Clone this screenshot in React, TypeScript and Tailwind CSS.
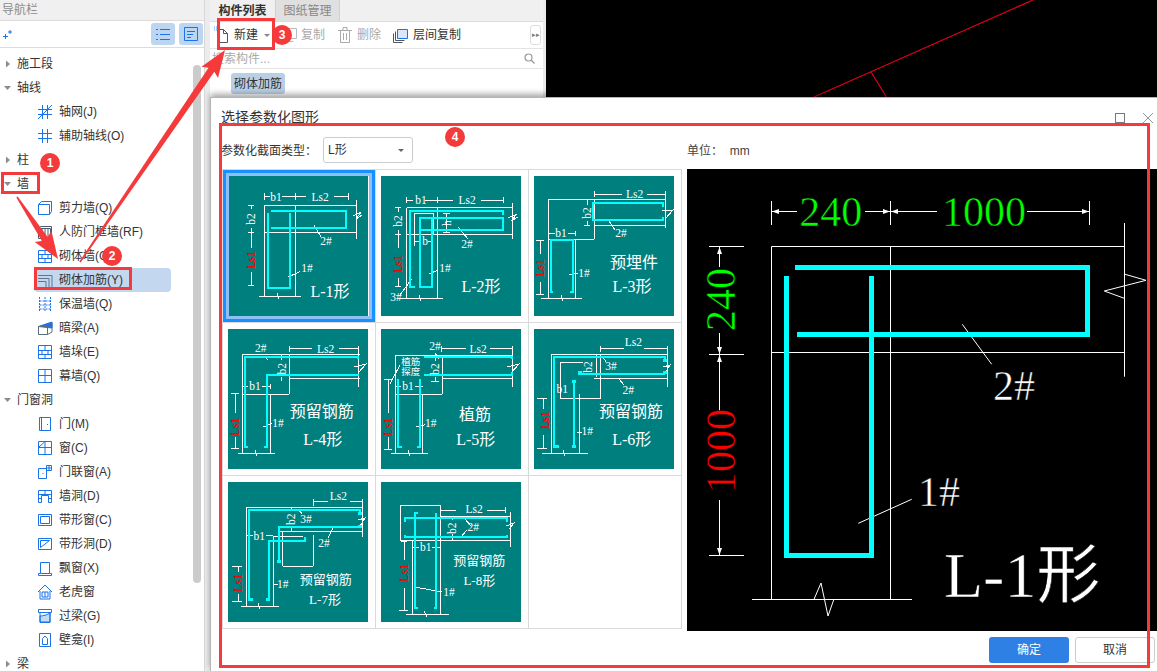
import { ReactNode } from "react";

type Label = [string, number, number, number?, string?, boolean?];
type Thumb = { name: string; lines: string[]; bars: string[]; thick?: string[]; labels: Label[] };

const thumbs: Thumb[] = [
  {
    name: "L-1",
    lines: [
      "36,17 36,24", "67.3,17 67.3,24", "120,17 120,24", "36,20.7 42,20.7", "54,20.7 78,20.7", "106,20.7 120,20.7",
      "36,29 128.7,29", "36,56.3 128.7,56.3", "128.7,24 128.7,63", "125,40 133,36 128,43 134,39",
      "36,29 36,120", "67.3,29 67.3,120", "31,120 72.7,120", "49,117 51,123",
      "20,29 26,29", "20,56 26,56", "20,109 26,109", "23,29 23,33", "23,52 23,72", "23,96 23,109",
      "86,49 93,60.7", "60,101 72,95.7",
    ],
    bars: ["43,35 118,35 118,51.7 43,51.7", "40.3,37.3 40.3,112 62.3,112 62.3,37.3"],
    labels: [
      ["b1", 48, 20.7], ["Ls2", 92, 20.7], ["b2", 23, 43, 11.5, "#fff", true], ["Ls1", 23, 84, 11.5, "#f00", true],
      ["2#", 98, 65], ["1#", 79, 92], ["L-1形", 102, 115, 16],
    ],
  },
  {
    name: "L-2",
    lines: [
      "25.7,21 25.7,27", "56.3,21 56.3,27", "122,21 122,27", "25.7,24 32,24", "44,24 72,24", "100,24 122,24",
      "25.7,31.7 131.7,31.7", "25.7,58 131.7,58", "131.7,27 131.7,63", "127,42 136,38 130,45 137,41",
      "25.7,31.7 25.7,122", "56.3,31.7 56.3,122", "16,122 61.7,122", "38,119 40,125",
      "33.3,37.3 52.3,37.3 52.3,58", "33.3,37.3 33.3,70", "65.7,37.7 65.7,56", "62,37.7 69,37.7", "62,56 69,56",
      "33,65 40,65", "47,65 52,65",
      "14,31.7 20,31.7", "14,58 20,58", "14,110 20,110", "17.3,31.7 17.3,36", "17.3,54 17.3,72", "17.3,102 17.3,110",
      "48,98 57,94", "77,51 87,63", "30.7,103 19,119",
    ],
    bars: [
      "121.7,39 121.7,35 29,35 29,110.7 34,110.7", "39,42.3 121.7,42.3 121.7,54 39,54",
      "39,40.7 39,110.7 51.3,110.7 51.3,40.7",
    ],
    labels: [
      ["b1", 40, 24], ["Ls2", 86, 24], ["b", 44, 65], ["h", 66, 47, 11.5, "#fff", true],
      ["b2", 17.3, 45, 11.5, "#fff", true], ["Ls1", 17.3, 88, 11.5, "#f00", true],
      ["1#", 64, 92], ["2#", 86, 68], ["3#", 15, 120.7], ["L-2形", 100, 110.7, 16],
    ],
  },
  {
    name: "L-3",
    lines: [
      "60.3,15 60.3,21", "131.7,15 131.7,52", "60.3,18 88,18", "113,18 131.7,18",
      "14.3,23.3 131.7,23.3", "14.3,23.3 14.3,122", "60.3,23.3 60.3,63", "14.3,63 60.3,63", "60.3,49 131.7,49",
      "41,63 41,122", "6.7,122 47.7,122", "27,119 29,125", "128,35 139,34 132,42",
      "53.3,23.3 53.3,29", "53.3,45 53.3,49", "50,49 56,49", "14.3,57 21,57", "34,57 41,57", "41,55 41,60",
      "2,64 10,64", "2,118 10,118", "6,64 6,78", "6,106 6,118",
      "35,99 44,97", "74.3,44 81,54",
    ],
    bars: [
      "129.3,30.7 129.3,27.3 59.3,27.3 59.3,44 129.3,44 129.3,40.7",
      "19.3,115.7 16.7,115.7 16.7,64 39.3,64 39.3,115.7 36,115.7",
    ],
    labels: [
      ["Ls2", 100.7, 18], ["b1", 27, 57], ["b2", 53, 37, 11.5, "#fff", true], ["Ls1", 6, 92, 11.5, "#f00", true],
      ["1#", 50, 97], ["2#", 87, 57], ["预埋件", 100, 86.7, 16], ["L-3形", 98, 110.7, 16],
    ],
  },
  {
    name: "L-4",
    lines: [
      "61.3,17 61.3,23", "130.7,17 130.7,58", "61.3,19.7 84,19.7", "111,19.7 130.7,19.7",
      "14.7,25.3 132,25.3", "14.7,25.3 14.7,124", "61.3,25.3 61.3,65", "14.7,65 61.3,65", "61.3,49.7 132,49.7",
      "42,65 42,124", "10,124 47,124", "27,121 29,127", "126,38 138,35 131,43",
      "53.7,25.3 53.7,31", "53.7,48 53.7,52", "14.7,57.3 20,57.3", "34,57.3 42,57.3", "42,55 42,60",
      "3,64.7 11,64.7", "3,119.7 11,119.7", "7,64.7 7,84", "7,108 7,119.7",
      "35.3,98 43.7,94.7", "36,27 40,31",
    ],
    bars: [
      "130.3,30 130.3,27.7 17,27.7 17,118 20.3,118",
      "130.3,44.7 130.3,45.7 38.7,45.7 38.7,118 36,118",
    ],
    labels: [
      ["Ls2", 97.7, 19.7], ["2#", 32.7, 19], ["b2", 53.7, 39.7, 11.5, "#fff", true], ["b1", 27, 57.3],
      ["Ls1", 7, 98, 11.5, "#f00", true], ["1#", 50, 94], ["预留钢筋", 93.7, 82, 16], ["L-4形", 94.7, 110, 16],
    ],
  },
  {
    name: "L-5",
    lines: [
      "60.7,17 60.7,23", "131.7,17 131.7,58", "60.7,19.7 85,19.7", "109,19.7 131.7,19.7",
      "14.7,26.3 132,26.3", "14.7,26.3 14.7,124", "61.3,26.3 61.3,65", "14.7,65 61.3,65", "61.3,49.7 132,49.7",
      "41.7,65 41.7,124", "10,124 47,124", "27,121 29,127", "126,38 138,35 131,43",
      "9,54.7 19,36", "14.7,57.3 20,57.3", "34,57.3 41.7,57.3",
      "54,28 54,32", "54,48 54,52", "50,52 58,52",
      "3,50 11,50", "3,120 11,120", "7.3,50 7.3,84", "7.3,108 7.3,120", "35,98 44,95.7", "54,24 58,30",
    ],
    bars: [
      "43,27.7 130.7,27.7 130.7,30", "43,45.7 130.7,45.7 130.7,43",
      "17.3,49.7 17.3,118 20.7,118", "39,49.7 39,118 35.7,118",
    ],
    labels: [
      ["Ls2", 97, 19.7], ["2#", 54, 17], ["植筋", 29.7, 33, 9.5], ["探度", 29.7, 43, 9.5], ["b1", 27, 57.3],
      ["b2", 54, 40, 11.5, "#fff", true], ["Ls1", 7.3, 98, 11.5, "#f00", true], ["1#", 49.7, 94],
      ["植筋", 94, 85.7, 16], ["L-5形", 94.7, 110, 16],
    ],
  },
  {
    name: "L-6",
    lines: [
      "66.7,17 66.7,23", "133.3,17 133.3,58", "66.7,19.7 90,19.7", "110,19.7 133.3,19.7",
      "17,25.3 134.3,25.3", "17,25.3 17,124", "66.7,25.3 66.7,69", "26,69 66.7,69", "26,33.7 49.3,33.7", "26,33.7 26,69",
      "62.7,25.3 62.7,48", "60,49.7 134.3,49.7", "45,65 45,124", "8.3,124 54,124", "29,121 31,127", "129,38 136,36 131,44",
      "69,28 72,33", "85,50 90,56",
      "3,69 13,69", "3,119.7 13,119.7", "9.3,69 9.3,80", "9.3,106 9.3,119.7", "43,103 48,103",
    ],
    bars: ["131,31.3 131,27.7 20.3,27.7 20.3,118 22.7,118", "44.3,44.7 131,44.7", "40,53 40,118"],
    thick: ["44,43.5 48,43.5", "129,31 133,31", "129,43 133,43", "21,117.5 25,117.5", "38,117.5 42,117.5", "38,52.5 42,52.5"],
    labels: [
      ["Ls2", 99.3, 13], ["b1", 28.3, 59.7], ["b2", 54.3, 38, 11.5, "#fff", true], ["3#", 77, 37.3], ["2#", 94.3, 61],
      ["Ls1", 11, 91.3, 11.5, "#f00", true], ["1#", 53.3, 102], ["预留钢筋", 97, 82.3, 16], ["L-6形", 97.7, 110, 16],
    ],
  },
  {
    name: "L-7",
    lines: [
      "85.3,17 85.3,24", "134.3,17 134.3,55", "85.3,19.7 100,19.7", "122,19.7 134.3,19.7",
      "18,25.3 135.3,25.3", "18,25.3 18,124", "85.3,53 85.3,84", "54.7,84 85.3,84", "54.7,49 54.7,84", "45.3,54 45.3,124",
      "45.3,54 75,54", "50.3,49 135.3,49", "13,124 51,124", "30,121 32,127", "130,38 137,36 132,44",
      "63,25.3 63,29", "63,45 63,49", "18,53.7 25,53.7", "38,53.7 45,53.7", "71,28 74,32", "105,46 100,56",
      "4,84 14,84", "4,119.7 14,119.7", "10.3,84 10.3,90", "10.3,112 10.3,119.7", "45,102 50,102",
    ],
    bars: [
      "132,30.3 132,27.7 21.3,27.7 21.3,118 23.7,118", "132,45.3 51.3,45.3 51.3,79 49.3,79",
      "77,54.7 77,58.7 41.3,58.7 41.3,118 38.7,118",
    ],
    thick: ["130,31 134,31", "130,44 134,44", "21,117.5 25,117.5", "38,117.5 42,117.5", "49,79 53,79"],
    labels: [
      ["Ls2", 110.3, 14], ["b2", 63, 37.3, 11.5, "#fff", true], ["3#", 78, 37], ["b1", 31.3, 53.7], ["2#", 96, 61.3],
      ["1#", 54.7, 102], ["Ls1", 10.3, 101, 11.5, "#f00", true], ["预留钢筋", 97.7, 97, 13], ["L-7形", 97, 117, 13],
    ],
  },
  {
    name: "L-8",
    lines: [
      "19.3,23 59,23 59,58.7 19.3,58.7 19.3,23", "59,28 75,28", "106,28 124,28", "124,25 124,31",
      "59,34.7 129,34.7", "59,58.7 129,58.7", "129,30 129,65", "125,44 133,41 128,47",
      "31.7,58.7 31.7,132.3", "59,58.7 59,132.3", "25,132.3 68,132.3", "43,129 46,135",
      "71,34.7 71,38", "71,52 71,58.7", "32,65.3 38,65.3", "51,65.3 59,65.3",
      "20,59 26,59", "18,128 27,128", "23,59 23,78", "23,106 23,128",
      "34,105 61,110", "84,37 90,44", "86,48 80,55",
    ],
    bars: [
      "24,40 24,36.3 126.3,36.3 126.3,40", "24,52.7 24,55 126.3,55 126.3,52.7",
      "37,31 34,31 34,126.3 37,126.3", "55.3,30.7 55.3,126.3 53,126.3",
    ],
    labels: [
      ["Ls2", 93, 27], ["b2", 70.7, 46.3, 11.5, "#fff", true], ["2#", 92.3, 44.7], ["b1", 44.7, 65.3],
      ["Ls1", 23, 91, 11.5, "#f00", true], ["1#", 68, 110], ["预留钢筋", 98.3, 78, 13], ["L-8形", 98.3, 98, 13],
    ],
  },
];

function ThumbDrawing({ t }: { t: Thumb }) {
  return (
    <svg width="140" height="140" viewBox="0 0 140 140" className="block bg-[#007f7f]">
      <g shapeRendering="crispEdges" fill="none">
        {t.lines.map((p, i) => (
          <polyline key={i} points={p} stroke="#fff" strokeWidth="1" />
        ))}
        {t.bars.map((p, i) => (
          <polyline key={i} points={p} stroke="#00ffff" strokeWidth="2" />
        ))}
        {(t.thick || []).map((p, i) => (
          <polyline key={i} points={p} stroke="#00ffff" strokeWidth="3" />
        ))}
      </g>
      {t.labels.map(([s, x, y, size = 11.5, color = "#fff", rot], i) => (
        <text
          key={i}
          x={x}
          y={y}
          fill={color}
          fontSize={size}
          textAnchor="middle"
          dominantBaseline="central"
          fontWeight={color === "#f00" ? 700 : 400}
          transform={rot ? `rotate(-90 ${x} ${y})` : undefined}
          className="[font-family:'Liberation_Serif','Noto_Sans_CJK_SC',serif]"
        >
          {s}
        </text>
      ))}
    </svg>
  );
}

const iconPaths: Record<string, ReactNode> = {
  axis: <path d="M1 5.500h14M1 10.500h14M5.500 1v14M10.500 1v14M1 15 15 1" />,
  aux: <path d="M1 5.500h14M1 10.500h14M5.500 1v14M10.500 1v14" />,
  shear: <path d="M1.500 4.500h11v10h-11zM1.500 4.500l3-3h10v10l-2 3" />,
  civil: <path d="M1.500 4.500h12v10h-12zM1.500 4.500l2-2h11v10l-1 2M5 4.500v10M8 4.500v10M11 4.500v10" stroke="#4a5c72" />,
  brick: <path d="M1.500 2.500h13v12h-13zM1.500 6.500h13M1.500 10.500h13M8 2.500v4M5 6.500v4M11 6.500v4M8 10.500v4" />,
  rebar: <path d="M1 3.500h14v12M1 6.500h11v9M1 9.500h8v6" stroke="#5b7690" />,
  thermal: <path d="M2.500 1v15M13.500 1v15M8 1v15M2.500 5h11M2.500 9h11M2.500 13h11" strokeDasharray="2 1" />,
  beam: (
    <>
      <path d="M1.500 6.500 15 2v6L1.500 6.500z" fill="#1a73e8" />
      <path d="M1.500 6.500h9v8h-9zM10.500 14.500 15 12V3M10.500 6.500 15 3" stroke="#5a6b80" />
    </>
  ),
  pilaster: <path d="M1.500 1.500h13v13h-13zM1.500 6.500h13M1.500 10.500h13M8 1.500v5M5 6.500v4M11 6.500v4M8 10.500v4" />,
  curtain: <path d="M1.500 1.500h13v13h-13zM1.500 7.500h13M8 1.500v13" />,
  door: <path d="M2.500 1.500h11v13h-11zM4.500 1.500v13M10.500 8v1" />,
  window: <path d="M1.500 1.500h13v13h-13zM1.500 7.500h13M8 1.500v13M2 7 7.500 2" />,
  doorwin: <path d="M1.500 4.500h8v10h-8zM9.500 1.500h5v5h-5zM12 1.500v5M9.500 4h5M6 9v1" />,
  hole: <path d="M1.500 2.500h13v12h-3v-7h-7v7h-3zM1.500 6.500h13M8 2.500v4M1.500 10.500h3M11.500 10.500h3" />,
  strip: <path d="M1.500 2.500h13v11h-13zM3.500 4.500h9v7h-9z" />,
  striph: <path d="M1.500 2.500h13v11h-13zM3.500 4.500h9M3.500 4.500v7M3.500 11.500l9-7" />,
  bay: <path d="M3.500 2.500h9v11h-9zM1.500 13.500v2h13v-2M1.500 13.500h2M12.500 13.500h2" />,
  dormer: <path d="M1 8 8 1l7 7M3 7v8h10V7M5 8h6v5H5zM8 8v5" />,
  lintel: (
    <>
      <path d="M3 14V8c3 0 7-1 10-3v9z" fill="#c6dcf5" />
      <path d="M1.500 1.500h13v3h-13zM3 4.500v10h10v-10" />
    </>
  ),
  niche: <path d="M2.500 1.500h11v13h-11zM5.500 12.500V6.500L8 4l2.500 2.500v6z" />,
};

type Node = { label: string; icon?: string; selected?: boolean; open?: boolean };
const tree: Node[] = [
  { label: "施工段" },
  { label: "轴线", open: true },
  { label: "轴网(J)", icon: "axis" },
  { label: "辅助轴线(O)", icon: "aux" },
  { label: "柱" },
  { label: "墙", open: true },
  { label: "剪力墙(Q)", icon: "shear" },
  { label: "人防门框墙(RF)", icon: "civil" },
  { label: "砌体墙(Q)", icon: "brick" },
  { label: "砌体加筋(Y)", icon: "rebar", selected: true },
  { label: "保温墙(Q)", icon: "thermal" },
  { label: "暗梁(A)", icon: "beam" },
  { label: "墙垛(E)", icon: "pilaster" },
  { label: "幕墙(Q)", icon: "curtain" },
  { label: "门窗洞", open: true },
  { label: "门(M)", icon: "door" },
  { label: "窗(C)", icon: "window" },
  { label: "门联窗(A)", icon: "doorwin" },
  { label: "墙洞(D)", icon: "hole" },
  { label: "带形窗(C)", icon: "strip" },
  { label: "带形洞(D)", icon: "striph" },
  { label: "飘窗(X)", icon: "bay" },
  { label: "老虎窗", icon: "dormer" },
  { label: "过梁(G)", icon: "lintel" },
  { label: "壁龛(I)", icon: "niche" },
  { label: "梁" },
];

function TreeRow({ node }: { node: Node }) {
  if (node.icon) {
    return (
      <div className={`ml-[34px] flex h-6 w-[137px] items-center pl-[3px] ${node.selected ? "rounded-sm bg-[#c3d7ee]" : ""}`}>
        <svg width="16" height="16" viewBox="0 0 16 16" fill="none" stroke="#1a73e8" strokeWidth="1" className="shrink-0">
          {iconPaths[node.icon]}
        </svg>
        <span className="ml-[6px] whitespace-nowrap">{node.label}</span>
      </div>
    );
  }
  return (
    <div className="flex h-6 items-center">
      <svg width="17" height="10" viewBox="0 0 17 10" fill="#8c8c8c" className="shrink-0">
        {node.open ? <path d="M4 3h7L7.500 7z" /> : <path d="M6 1.500 10 5 6 8.500z" />}
      </svg>
      <span className="whitespace-nowrap">{node.label}</span>
    </div>
  );
}

function Sidebar() {
  return (
    <aside className="relative flex h-full w-[204px] shrink-0 flex-col bg-white">
      <div className="flex h-5 shrink-0 items-center bg-[#f0f0f0] pl-[2px] text-[#8d8d8d]">导航栏</div>
      <div className="flex h-[28px] shrink-0 items-center justify-between border-y border-[#dcdcdc] pr-[1px] pl-[2px]">
        <svg width="12" height="12" viewBox="0 0 12 12" fill="none" stroke="#1a73e8" strokeWidth="1">
          <path d="M3.500 6v5M1 8.500h5M8 2v4M6 4h4" />
        </svg>
        <div className="flex gap-1">
          <div className="flex h-[22px] w-6 items-center justify-center rounded-[3px] bg-[#bcd6f1]">
            <svg width="16" height="14" viewBox="0 0 16 14" fill="none" stroke="#1a73e8" strokeWidth="1">
              <path d="M5 2.500h10M5 7.500h10M5 12.500h10M1 2.500h2M1 7.500h2M1 12.500h2" />
            </svg>
          </div>
          <div className="flex h-[22px] w-6 items-center justify-center rounded-[3px] bg-[#bcd6f1]">
            <svg width="16" height="16" viewBox="0 0 16 16" fill="none" stroke="#1a73e8" strokeWidth="1">
              <path d="M1.500 1.500h13v13h-13zM4 5.500h8M4 8.500h6M4 11.500h4" />
            </svg>
          </div>
        </div>
      </div>
      <div className="shrink-0 pt-[4px]">
        {tree.map((n) => (
          <TreeRow key={n.label} node={n} />
        ))}
      </div>
      <div className="absolute top-[65px] left-[193px] h-[518px] w-2 rounded bg-[#cbcbcb]" />
    </aside>
  );
}

function MiddlePanel() {
  return (
    <section className="flex h-full w-[333px] shrink-0 flex-col bg-white">
      <div className="flex h-[22px] shrink-0 border-b border-[#dcdcdc] bg-[#f0f0f0]">
        <div className="flex w-[65px] items-center justify-center font-bold text-[#333]">构件列表</div>
        <div className="flex w-[65px] items-center justify-center border-x border-[#d0d0d0] bg-[#e0e0e0] text-[#888]">图纸管理</div>
      </div>
      <div className="flex h-[27px] shrink-0 items-center border-b border-[#e4e4e4] pl-[4px]">
        <svg width="16" height="18" viewBox="0 0 16 18" fill="none" stroke="#555" strokeWidth="1" className="shrink-0">
          <path d="M3.500 3.500h6l4 4v9h-10zM9.500 3.500v4h4" />
          <path d="M0 1h3v3H0z" stroke="#5b9be8" strokeDasharray="1 1" />
        </svg>
        <span className="ml-[4px] text-[#333]">新建</span>
        <svg width="7" height="5" viewBox="0 0 7 5" fill="#888" className="ml-[6px]"><path d="M0 1h6L3 4z" /></svg>
        <svg width="12" height="14" viewBox="0 0 12 14" fill="none" stroke="#bbb" strokeWidth="1" className="ml-[14px]">
          <path d="M3.500 .5h8v10h-8zM.5 3.500v10h8" />
        </svg>
        <span className="ml-[4px] text-[#aaa]">复制</span>
        <svg width="14" height="16" viewBox="0 0 14 16" fill="none" stroke="#aaa" strokeWidth="1" className="ml-[13px]">
          <path d="M0 3.500h14M5 3.500v-3h4v3M2.500 3.500v12h9v-12M5.500 6v7M8.500 6v7" />
        </svg>
        <span className="ml-[5px] text-[#aaa]">删除</span>
        <svg width="15" height="15" viewBox="0 0 15 15" fill="none" strokeWidth="1" className="ml-[12px]">
          <path d="M4.500 1.500h10v9h-10z" stroke="#1a73e8" fill="#d8e8fa" />
          <path d="M2.500 3.500v9h9M.5 5.500v9h9" stroke="#555" />
        </svg>
        <span className="ml-[5px] text-[#333]">层间复制</span>
        <div className="ml-auto mr-[2px] flex h-5 w-[11px] items-center justify-center rounded-[3px] border border-[#ddd] text-[7px] text-[#777]">▸▸</div>
      </div>
      <div className="flex h-[20px] shrink-0 items-center justify-between border-b border-[#e4e4e4] pr-[8px] pl-[2px] text-[#aaa]">
        <span>搜索构件...</span>
        <svg width="11" height="11" viewBox="0 0 11 11" fill="none" stroke="#999" strokeWidth="1.200"><circle cx="4.500" cy="4.500" r="3.500" /><path d="m7 7 3.500 3.500" /></svg>
      </div>
      <div className="pt-[4px] pl-[21px]">
        <div className="flex h-[21px] w-[54px] items-center justify-center rounded-[3px] bg-[#b9cfe6] text-[#333]">砌体加筋</div>
      </div>
    </section>
  );
}

function Preview() {
  const white = { stroke: "#fff", fill: "none", strokeWidth: 1 };
  const cyan = { stroke: "#00ffff", fill: "none", strokeWidth: 5 };
  const serif = "[font-family:'Liberation_Serif','Noto_Sans_CJK_SC',serif]";
  return (
    <svg width="470" height="462" viewBox="0 0 470 462" className="block shrink-0 bg-black">
      <g {...white}>
        <path d="M84.500 32v24M203.500 32v24M402.500 32v24M84.500 42.500H110M178 42.500h25.500M203.500 42.500H250M340 42.500h62.500" />
        <path d="M84.500 77.500h353M84.500 183.500h353M84.500 77.500V430.500M203.500 77.500V430.500M65 430.500h160M437.500 54v153.700" />
        <path d="M438 105.300 459 111.300 417.300 122 437.300 129.300" />
        <path d="M22 77.500h35M22 185.500h35M22 386.500h35M32.500 77.500V98M32.500 164v21.500M32.500 185.500V241.700M32.500 331v55" />
        <path d="M275.300 155.300 304.700 195.300M171.300 354.300 224.700 330.300" />
        <path d="M127 430.300 134 414 141 447 147 430" />
      </g>
      <g fill="#fff">
        <path d="M85 42.500 92 40v5zM203 42.500l-7-2.500v5zM204 42.500l7-2.500v5zM402 42.500l-7-2.500v5z" />
        <path d="M32.500 78l-2.500 7h5zM32.500 185l-2.500-7h5zM32.500 186l-2.500 7h5zM32.500 386l-2.500-7h5z" />
      </g>
      <g {...cyan}>
        <path d="M108 98.500H399.500M400.500 96V168M110 165.500H400M99.500 107V386.500H184.500V107" />
      </g>
      <g className={serif} fontSize="42" stroke="#000" strokeWidth="0.5">
        <text x="143.700" y="57" fill="#00ff00" textAnchor="middle">240</text>
        <text x="297" y="57" fill="#00ff00" textAnchor="middle">1000</text>
        <text transform="translate(48 130.500) rotate(-90)" fill="#00ff00" textAnchor="middle">240</text>
        <text transform="translate(48 282) rotate(-90)" fill="#ff0000" textAnchor="middle">1000</text>
        <text x="306" y="231" fill="#fff">2#</text>
        <text x="231" y="336.700" fill="#fff">1#</text>
        <text x="257" y="427.700" fill="#fff" fontSize="64">L-1形</text>
      </g>
    </svg>
  );
}

function Dialog() {
  return (
    <div className="absolute top-[97px] right-0 bottom-0 left-[210px] flex flex-col border-t border-l border-[#b5b5b5] bg-white shadow-[0_-3px_6px_rgba(0,0,0,0.35)]">
      <div className="flex h-[39px] shrink-0 items-center justify-between pr-[3px] pl-[10px]">
        <span className="text-[14px] text-[#333]">选择参数化图形</span>
        <div className="flex items-center gap-[17px]">
          <div className="h-[10px] w-[10px] border border-[#777]" />
          <svg width="12" height="12" viewBox="0 0 12 12" fill="none" stroke="#999" strokeWidth="1"><path d="M1 1l10 10M11 1 1 11" /></svg>
        </div>
      </div>
      <div className="flex h-[26px] shrink-0 items-center pl-[10px]">
        <div className="flex w-[466px] items-center">
          <span className="w-[102px] pt-[2px] text-[#333]">参数化截面类型：</span>
          <div className="flex h-[26px] w-[90px] items-center justify-between rounded-[3px] border border-[#ccc] pr-[7px] pl-[4px] text-[#333]">
            <span>L形</span>
            <svg width="7" height="5" viewBox="0 0 7 5" fill="#666"><path d="M0 1h6L3 4z" /></svg>
          </div>
        </div>
        <span className="pt-[2px] text-[#444]">单位：&nbsp;&nbsp;mm</span>
      </div>
      <div className="mt-[6px] flex shrink-0 gap-[5px] pl-[11px]">
        <div className="grid w-[460px] grid-cols-[repeat(3,153px)] grid-rows-[repeat(3,153px)] self-start border-t border-l border-[#d9d9d9]">
          {thumbs.map((t, i) => (
            <div key={t.name} className="relative border-r border-b border-[#d9d9d9] pt-[6px] pl-[5px]">
              <ThumbDrawing t={t} />
              {i === 0 && (
                <div className="absolute inset-0 border-[3px] border-[#1890ff]">
                  <div className="h-full w-full border-[3px] border-[#8fc0f5]" />
                </div>
              )}
            </div>
          ))}
          <div className="border-r border-b border-[#d9d9d9]" />
        </div>
        <Preview />
      </div>
      <div className="mt-[6px] flex shrink-0 justify-end gap-[6px] pr-[2px]">
        <div className="flex h-[26px] w-20 items-center justify-center rounded-[3px] bg-[#2f80e4] text-white">确定</div>
        <div className="flex h-[26px] w-20 items-center justify-center rounded-[3px] border border-[#ccc] text-[#333]">取消</div>
      </div>
    </div>
  );
}

function arrow(x1: number, y1: number, x2: number, y2: number) {
  const len = Math.hypot(x2 - x1, y2 - y1);
  const dx = (x2 - x1) / len;
  const dy = (y2 - y1) / len;
  const nx = -dy;
  const ny = dx;
  const bx = x2 - dx * 24;
  const by = y2 - dy * 24;
  const pts = [
    [x1 + nx * 0.8, y1 + ny * 0.8],
    [bx + nx * 3.5, by + ny * 3.5],
    [bx + nx * 10 - dx * 3, by + ny * 10 - dy * 3],
    [x2, y2],
    [bx - nx * 10 - dx * 3, by - ny * 10 - dy * 3],
    [bx - nx * 3.5, by - ny * 3.5],
    [x1 - nx * 0.8, y1 - ny * 0.8],
  ];
  return pts.map((p) => p.join(",")).join(" ");
}

function Badge({ n, pos }: { n: number; pos: string }) {
  return (
    <div className={`absolute flex h-5 w-5 items-center justify-center rounded-full bg-[#f43a3a] text-[12px] font-bold text-white ${pos}`}>
      {n}
    </div>
  );
}

export default function App() {
  return (
    <div className="relative flex h-[671px] w-[1157px] overflow-hidden bg-white text-[12px] text-[#333] [font-family:'Liberation_Sans','Noto_Sans_CJK_SC',sans-serif]">
      <Sidebar />
      <div className="h-full w-[6px] shrink-0 border-l border-[#d8d8d8] bg-[#ececec]" />
      <MiddlePanel />
      <div className="h-full w-[3px] shrink-0 bg-[#ececec]" />
      <div className="relative h-full flex-1 bg-black">
        <svg width="611" height="98" viewBox="0 0 611 98" fill="none" stroke="#e0001c" strokeWidth="1.200" className="absolute top-0 left-0">
          <path d="M487 0 268 97M325 72 340.500 97" />
        </svg>
      </div>
      <Dialog />

      {/* hand-drawn annotations on top of the screenshot */}
      <div className="absolute top-[172px] left-[1px] h-[22px] w-[39px] border-[3px] border-[#f43a3a]" />
      <div className="absolute top-[267px] left-[34px] h-[23px] w-[98px] border-[3px] border-[#f43a3a]" />
      <div className="absolute top-[18px] left-[217px] h-[32px] w-[58px] border-[3px] border-[#f43a3a]" />
      <div className="absolute top-[123px] left-[219px] h-[545px] w-[931px] border-[3px] border-[#f43a3a]" />
      <svg width="300" height="300" viewBox="0 0 300 300" fill="#f43a3a" className="absolute top-0 left-0">
        <polygon points={arrow(17, 197, 58, 259)} />
        <polygon points={arrow(80, 262, 225, 50)} />
      </svg>
      <Badge n={1} pos="top-[153px] left-[40px]" />
      <Badge n={2} pos="top-[246px] left-[102px]" />
      <Badge n={3} pos="top-[25px] left-[272px]" />
      <Badge n={4} pos="top-[127px] left-[445px]" />
    </div>
  );
}
